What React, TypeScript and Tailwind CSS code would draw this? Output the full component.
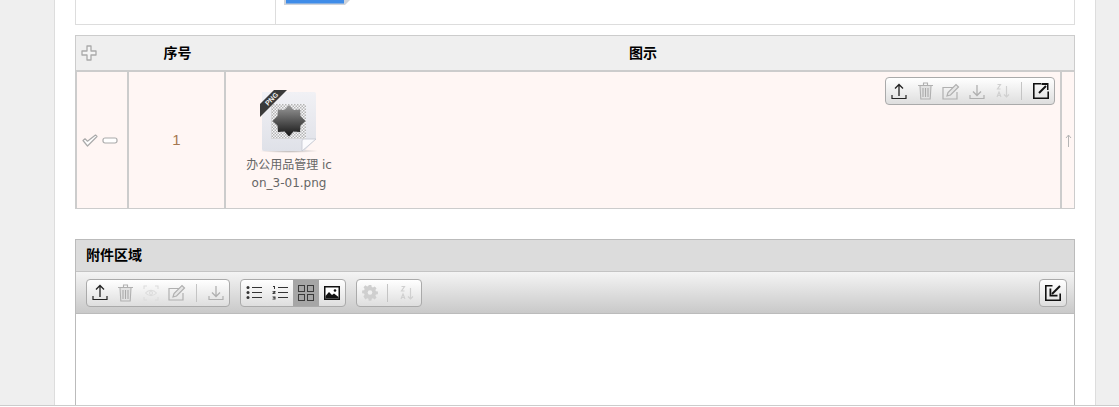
import React from 'react';

const ink = '#222';
const dim = '#b0b0b0';
const faint = '#d0d0d0';

const Upload = ({ c = ink }: { c?: string }) => (
  <svg width="16" height="17" viewBox="0 0 16 17" fill="none" stroke={c} strokeWidth="1.3">
    <path d="M8 13V2M4 5.500 8 1.500l4 4" />
    <path d="M1 12v3.500h14V12" strokeWidth="1.200" />
  </svg>
);

const Download = ({ c = dim }: { c?: string }) => (
  <svg width="16" height="17" viewBox="0 0 16 17" fill="none" stroke={c} strokeWidth="1.3">
    <path d="M8 2v10M4 8.500l4 4 4-4" />
    <path d="M1 12v3.500h14V12" strokeWidth="1.200" />
  </svg>
);

const Trash = () => (
  <svg width="15" height="18" viewBox="0 0 15 18" fill="none" stroke={dim} strokeWidth="1.100">
    <path d="M0 3.500h15M5.500 3V1h4v2" />
    <path d="M2 4l.8 13h9.400L13 4" fill="#e2e2e2" />
    <path d="M5 6v9M7.500 6v9M10 6v9" stroke="#aaa" />
  </svg>
);

const Edit = () => (
  <svg width="18" height="17" viewBox="0 0 18 17" fill="none" stroke={dim} strokeWidth="1.200">
    <path d="M13 4.500H1v11.500h14V9" />
    <path d="M5 13l1-3.500L14 1.500l2.500 2.500-8 8z" fill="#e6e6e6" />
  </svg>
);

const Eye = () => (
  <svg width="16" height="16" viewBox="0 0 16 16" fill="none" stroke="#dcdcdc" strokeWidth="1.100">
    <path d="M1 4V1h3M12 1h3v3M15 12v3h-3M4 15H1v-3" />
    <path d="M2.500 8c3-3.500 8-3.500 11 0-3 3.500-8 3.500-11 0z" />
    <circle cx="8" cy="8" r="1.500" />
  </svg>
);

const Sort = () => (
  <svg width="14" height="16" viewBox="0 0 14 16" fill="none" stroke={faint} strokeWidth="1.200">
    <path d="M1.500 1.500h3l-3 4.500h3" />
    <path d="M1 14 3 9l2 5M1.800 12.500h2.400" />
    <path d="M10.500 3v11M8 11.500l2.500 2.500 2.500-2.500" />
  </svg>
);

const External = () => (
  <svg width="18" height="18" viewBox="0 0 18 18" fill="none" stroke="#111" strokeWidth="1.600">
    <path d="M9 1.800H1.800v14.400h14.400V9.500" />
    <path d="M7 11 14 4" strokeWidth="2" />
    <path d="M9.500 1h7v7H15V3h-5.500z" fill="#111" stroke="none" />
  </svg>
);

const Collapse = () => (
  <svg width="18" height="18" viewBox="0 0 18 18" fill="none" stroke="#111" strokeWidth="1.600">
    <path d="M8.500 1.800H1.800v14.400h14.400V9.500" />
    <path d="M16 2 8 10" strokeWidth="2" />
    <path d="M5.500 4.500V12.500h8v-1.800H7.300V4.500z" fill="#111" stroke="none" />
  </svg>
);

const Bullets = () => (
  <svg width="16" height="15" viewBox="0 0 16 15" fill="#333" stroke="none">
    <circle cx="2" cy="2.500" r="1.500" />
    <circle cx="2" cy="7.500" r="1.500" />
    <circle cx="2" cy="12.500" r="1.500" />
    <path d="M6 2h10v1H6zM6 7h10v1H6zM6 12h10v1H6z" />
  </svg>
);

const Numbered = () => (
  <svg width="16" height="15" viewBox="0 0 16 15" fill="#333" stroke="none">
    <path d="M1 1h2v3H2V2H1zM.5 6h3v1.200L2 8.200h1.500V9h-3V8l1.700-1.200H.5zM.5 11.500h3v3h-3v-.8h2v-.4H1v-.8h1.500v-.2h-2z" />
    <path d="M6 2h10v1H6zM6 7h10v1H6zM6 12h10v1H6z" />
  </svg>
);

const GridIcon = () => (
  <svg width="18" height="18" viewBox="0 0 18 18" fill="none" stroke="#3a3a3a" strokeWidth="1">
    <rect x="1.500" y="1.500" width="6" height="6" />
    <rect x="10.500" y="1.500" width="6" height="6" />
    <rect x="1.500" y="10.500" width="6" height="6" />
    <rect x="10.500" y="10.500" width="6" height="6" />
  </svg>
);

const Picture = () => (
  <svg width="16" height="14" viewBox="0 0 16 14">
    <rect width="16" height="14" fill="#111" />
    <rect x="1.500" y="1.500" width="13" height="11" fill="#fff" />
    <path d="M1.500 12.500v-2.500l3.500-4 3 3 2-1.500 4.500 3.500v1.500z" fill="#111" />
    <circle cx="11" cy="4.500" r="1.300" fill="#111" />
  </svg>
);

const Gear = () => (
  <svg width="16" height="16" viewBox="0 0 16 16" fill="#cfcfcf">
    <path d="M6.500 0h3l.4 2.300 1.400.6 2-1.300 2.100 2.100-1.300 2 .6 1.400 2.300.4v3l-2.300.4-.6 1.400 1.300 2-2.100 2.100-2-1.300-1.400.6-.4 2.300h-3l-.4-2.300-1.400-.6-2 1.300L.5 13.100l1.300-2-.6-1.400L-1 9.300v-3l2.300-.4.600-1.400-1.300-2L2.700 .4l2 1.300 1.400-.6z" transform="translate(1 0) scale(.88)" />
    <circle cx="8" cy="7.500" r="2.300" fill="#f0f0f0" />
  </svg>
);

const Plus = () => (
  <svg width="16" height="16" viewBox="0 0 16 16" fill="#f4f4f4" stroke="#aaa" strokeWidth="1.300">
    <path d="M6 1h4v5h5v4h-5v5H6v-5H1V6h5z" strokeLinejoin="round" />
  </svg>
);

const Check = () => (
  <svg width="16" height="13" viewBox="0 0 16 13" fill="#fff" stroke="#aaa" strokeWidth="1.200">
    <path d="M1 6.500 3 4.800l2.500 2.400L13.500 1 15 2.500 5.500 12z" strokeLinejoin="round" />
  </svg>
);

const Minus = () => (
  <svg width="16" height="7" viewBox="0 0 16 7" fill="#fff" stroke="#aaa" strokeWidth="1.200">
    <rect x="1" y="1" width="14" height="5" rx="2" />
  </svg>
);

const PngFile = () => (
  <svg width="62" height="64" viewBox="0 0 62 64">
    <defs>
      <pattern id="check" width="3" height="3" patternUnits="userSpaceOnUse">
        <rect width="3" height="3" fill="#f6f6f8" />
        <rect width="1.500" height="1.500" fill="#b4b4b4" />
        <rect x="1.500" y="1.500" width="1.500" height="1.500" fill="#b4b4b4" />
      </pattern>
      <linearGradient id="sheet" x1="0" y1="0" x2="0" y2="1">
        <stop offset="0" stopColor="#f1f1f5" />
        <stop offset="1" stopColor="#dfe1e8" />
      </linearGradient>
      <linearGradient id="star" x1="0" y1="0" x2="0" y2="1">
        <stop offset="0" stopColor="#999" />
        <stop offset="1" stopColor="#151515" />
      </linearGradient>
      <radialGradient id="shade">
        <stop offset="0" stopColor="#888" stopOpacity=".6" />
        <stop offset="1" stopColor="#888" stopOpacity="0" />
      </radialGradient>
    </defs>
    <ellipse cx="31" cy="62" rx="30" ry="2" fill="url(#shade)" />
    <path d="M4 3h52a2 2 0 0 1 2 2v45L46 62H6a2 2 0 0 1-2-2z" fill="url(#sheet)" />
    <path d="M44 62V52q0-2 2-2h12z" fill="#fbfbfd" stroke="#c4c6cf" strokeWidth=".8" />
    <rect x="13" y="15" width="35" height="35" fill="url(#check)" />
    <path d="M31 16l4.500 5 6.500-.5.500 6.500 5 5-5 4.500-.5 6.500-6.500-.5-4.500 5-4.500-5-6.500.5-.5-6.500-5-4.500 5-5 .5-6.500 6.500.5z" fill="url(#star)" />
    <path d="M16 1h13L2 28V15z" fill="#3a3a3a" />
    <text x="0" y="0" fill="#eee" fontSize="7" fontWeight="700" fontFamily="'Liberation Sans', sans-serif" transform="translate(10 17) rotate(-45)">PNG</text>
  </svg>
);

const Btn = ({ narrow = false, children }: { narrow?: boolean; children: React.ReactNode }) => (
  <span className={`flex items-center justify-center h-full ${narrow ? 'w-[20px]' : 'w-[26px]'}`}>{children}</span>
);

const Group = ({ className = '', children }: { className?: string; children: React.ReactNode }) => (
  <div className={`flex items-center h-[28px] box-border border border-[#aaa] rounded-[4px] bg-gradient-to-b from-[#ffffff] to-[#dedede] overflow-hidden ${className}`}>
    {children}
  </div>
);

export default function App() {
  return (
    <div className="flex h-[407px] w-[1119px] overflow-hidden bg-white font-['Liberation_Sans','Noto_Sans_CJK_SC',sans-serif]">
      <div className="w-[54px] h-[405px] bg-[#efefef] shrink-0" />
      <div className="w-[1042px] h-[405px] shrink-0 box-border border-x border-[#ddd] px-[20px] bg-white overflow-hidden">
        {/* previous form row, scrolled mostly out of view */}
        <div className="flex h-[25px] box-border border-x border-b border-[#ddd]">
          <div className="w-[200px] border-r border-[#ddd]" />
          <div className="pl-[7px]">
            <svg width="68" height="6" viewBox="0 0 68 6">
              <path d="M1 0h66l-5 5H1z" fill="#cfd3da" />
              <path d="M3 0h58v3.500H3z" fill="#3f8ce8" />
            </svg>
          </div>
        </div>

        {/* detail grid */}
        <div className="mt-[10px] box-border border border-[#ccc] h-[174px] flex flex-col">
          <div className="flex items-center h-[34px] bg-[#efefef] shrink-0 text-[14px] font-bold text-black">
            <div className="w-[53px] pl-[5px] flex items-center"><Plus /></div>
            <div className="w-[97px] text-center">序号</div>
            <div className="flex-1 text-center">图示</div>
            <div className="w-[14px]" />
          </div>
          <div className="flex flex-1 bg-[#fff6f4] border-t-2 border-[#ccc] min-h-0">
            <div className="w-[53px] shrink-0 box-border border-l border-r-2 border-[#ccc] flex items-center gap-[4px] pl-[5px]">
              <Check />
              <Minus />
            </div>
            <div className="w-[97px] shrink-0 box-border border-r-2 border-[#ccc] flex items-center justify-center text-[15px] text-[#a5774f]">1</div>
            <div className="relative flex-1 pl-[18px] pt-[17px]">
              <div className="w-[90px] flex flex-col items-center">
                <PngFile />
                <div className="text-[12px] leading-[18px] text-[#666] text-center break-all mt-[3px] font-['DejaVu_Sans','Noto_Sans_CJK_SC',sans-serif]">办公用品管理 icon_3-01.png</div>
              </div>
              <Group className="absolute top-[5px] right-[5px] w-[170px]">
                <Btn><Upload /></Btn>
                <Btn><Trash /></Btn>
                <Btn><Edit /></Btn>
                <Btn><Download /></Btn>
                <Btn><Sort /></Btn>
                <span className="w-px h-[18px] bg-[#c4c4c4] ml-[5px] mr-[9px]" />
                <Btn narrow><External /></Btn>
              </Group>
            </div>
            <div className="w-[14px] shrink-0 box-border border-l-2 border-[#ccc] flex items-center justify-center">
              <svg width="7" height="13" viewBox="0 0 7 13" fill="none" stroke="#b5b5b5" strokeWidth="1">
                <path d="M3.500 13V1M1 4l2.500-3L6 4" />
              </svg>
            </div>
          </div>
        </div>

        {/* attachment area */}
        <div className="mt-[30px] box-border border border-[#bbb] h-[170px]">
          <div className="h-[32px] bg-[#dcdcdc] border-b border-[#c4c4c4] box-border flex items-center px-[10px] text-[14px] font-bold text-black">附件区域</div>
          <div className="h-[42px] box-border border-b border-[#bbb] bg-gradient-to-b from-[#f4f4f4] to-[#c9c9c9] flex items-center pl-[10px] pr-[7px]">
            <Group className="w-[144px]">
              <Btn><Upload /></Btn>
              <Btn><Trash /></Btn>
              <Btn><Eye /></Btn>
              <Btn><Edit /></Btn>
              <span className="w-px h-[18px] bg-[#c4c4c4] ml-[6px] mr-[6px]" />
              <Btn><Download /></Btn>
            </Group>
            <Group className="w-[106px] ml-[10px]">
              <Btn><Bullets /></Btn>
              <Btn><Numbered /></Btn>
              <span className="flex items-center justify-center w-[26px] h-full bg-[#a6a6a6]"><GridIcon /></span>
              <Btn><Picture /></Btn>
            </Group>
            <Group className="w-[66px] ml-[10px]">
              <Btn><Gear /></Btn>
              <span className="w-px h-[18px] bg-[#c4c4c4] ml-[4px] mr-[9px]" />
              <Btn narrow><Sort /></Btn>
            </Group>
            <Group className="w-[28px] ml-auto justify-center"><Collapse /></Group>
          </div>
        </div>
      </div>
      <div className="flex-1 h-[405px] bg-[#efefef]" />
      <div className="fixed left-0 top-[405px] w-[1119px] h-px bg-[#ccc]" />
    </div>
  );
}
